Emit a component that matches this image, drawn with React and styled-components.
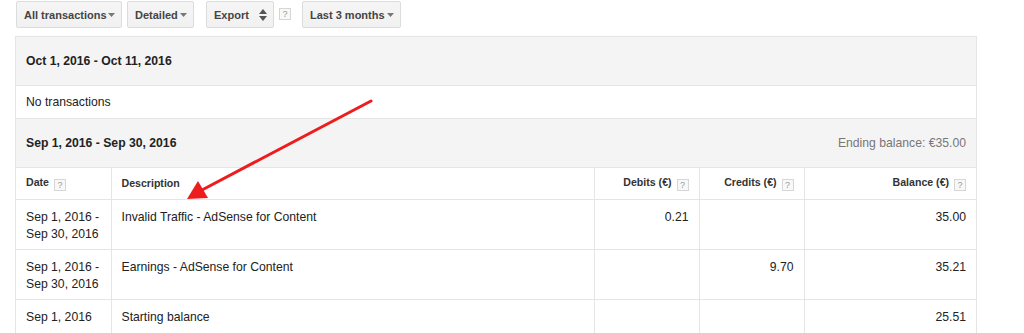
import React from 'react';
import styled, { createGlobalStyle } from 'styled-components';

const GlobalStyle = createGlobalStyle`
  body {
    margin: 0;
    background: #fff;
    font-family: 'Liberation Sans', Arial, sans-serif;
    color: #222;
  }
`;

function Help() {
  return <HelpBox>?</HelpBox>;
}

function Caret() {
  return (
    <svg width="7" height="4" viewBox="0 0 7 4">
      <path d="M0 0 L7 0 L3.5 4 Z" fill="#777" />
    </svg>
  );
}

function UpDown() {
  return (
    <svg width="8" height="12" viewBox="0 0 8 12">
      <path d="M0 5 L8 5 L4 0 Z" fill="#555" />
      <path d="M0 7 L8 7 L4 12 Z" fill="#555" />
    </svg>
  );
}

const rows = [
  { date: ['Sep 1, 2016 -', 'Sep 30, 2016'], desc: 'Invalid Traffic - AdSense for Content', debit: '0.21', credit: '', balance: '35.00' },
  { date: ['Sep 1, 2016 -', 'Sep 30, 2016'], desc: 'Earnings - AdSense for Content', debit: '', credit: '9.70', balance: '35.21' },
  { date: ['Sep 1, 2016'], desc: 'Starting balance', debit: '', credit: '', balance: '25.51' },
];

function App() {
  return (
    <Page>
      <GlobalStyle />
      <Toolbar>
        <Button $w={106}>All transactions <Caret /></Button>
        <Button $w={67}>Detailed <Caret /></Button>
        <Button $w={68} $ml={7}>Export <UpDown /></Button>
        <ToolHelp><Help /></ToolHelp>
        <Button $w={99} $ml={6}>Last 3 months <Caret /></Button>
      </Toolbar>

      <Panel>
        <SectionHead>
          <span>Oct 1, 2016 - Oct 11, 2016</span>
        </SectionHead>
        <Empty>No transactions</Empty>
        <SectionHead>
          <span>Sep 1, 2016 - Sep 30, 2016</span>
          <Ending>Ending balance: €35.00</Ending>
        </SectionHead>
        <Table>
          <colgroup>
            <col style={{ width: 95 }} />
            <col style={{ width: 483 }} />
            <col style={{ width: 105 }} />
            <col style={{ width: 105 }} />
            <col />
          </colgroup>
          <thead>
            <tr>
              <Th>Date <Help /></Th>
              <Th>Description</Th>
              <Th $right>Debits (€) <Help /></Th>
              <Th $right>Credits (€) <Help /></Th>
              <Th $right>Balance (€) <Help /></Th>
            </tr>
          </thead>
          <tbody>
            {rows.map((r, i) => (
              <tr key={i}>
                <Td $nowrap>{r.date.map((d) => <div key={d}>{d}</div>)}</Td>
                <Td>{r.desc}</Td>
                <Td $right>{r.debit}</Td>
                <Td $right>{r.credit}</Td>
                <Td $right>{r.balance}</Td>
              </tr>
            ))}
          </tbody>
        </Table>
      </Panel>

      <Arrow width="1024" height="333" viewBox="0 0 1024 333">
        <line x1="371" y1="101" x2="202" y2="190" stroke="#ee1c1c" strokeWidth="3" strokeLinecap="round" />
        <path d="M187 199 L198 181 L208 198 Z" fill="#ee1c1c" />
      </Arrow>
    </Page>
  );
}

export default App;

const Page = styled.div`
  position: relative;
  width: 1024px;
  height: 333px;
  overflow: hidden;
  padding: 1px 0 0 15px;
  box-sizing: border-box;
`;

const Toolbar = styled.div`
  display: flex;
  align-items: center;
  gap: 5px;
  height: 27px;
  padding-left: 1px;
  margin-bottom: 8px;
`;

const Button = styled.div`
  display: flex;
  align-items: center;
  justify-content: space-between;
  box-sizing: border-box;
  width: ${(p) => p.$w}px;
  height: 27px;
  margin-left: ${(p) => p.$ml || 0}px;
  padding: 0 6px 0 7px;
  background: linear-gradient(#f5f5f5, #f1f1f1);
  border: 1px solid #dcdcdc;
  border-radius: 2px;
  font-size: 11px;
  font-weight: bold;
  color: #444;
  white-space: nowrap;
`;

const ToolHelp = styled.div`
  display: flex;
  margin-left: -2px;
  padding-bottom: 1px;
`;

const HelpBox = styled.span`
  display: inline-flex;
  align-items: center;
  justify-content: center;
  box-sizing: border-box;
  width: 12px;
  height: 12px;
  margin-left: 2px;
  border: 1px solid #d6d6d6;
  background: #f8f8f8;
  color: #999;
  font-size: 9px;
  font-weight: normal;
  vertical-align: -2px;
  line-height: 1;
`;

const Panel = styled.div`
  width: 962px;
  border: 1px solid #e5e5e5;
  border-bottom: none;
  box-sizing: border-box;
`;

const SectionHead = styled.div`
  display: flex;
  align-items: center;
  justify-content: space-between;
  height: 48px;
  padding: 0 10px;
  background: #f4f4f4;
  border-bottom: 1px solid #e5e5e5;
  font-size: 12.2px;
  font-weight: bold;
  color: #222;
`;

const Ending = styled.span`
  font-weight: normal;
  color: #777;
`;

const Empty = styled.div`
  height: 32px;
  display: flex;
  align-items: center;
  padding: 0 10px;
  border-bottom: 1px solid #e5e5e5;
  font-size: 12.2px;
  color: #222;
`;

const Table = styled.table`
  width: 100%;
  table-layout: fixed;
  border-collapse: collapse;
  font-size: 12.2px;
`;

const Th = styled.th`
  height: 31px;
  padding: 0 10px;
  box-sizing: border-box;
  text-align: ${(p) => (p.$right ? 'right' : 'left')};
  font-size: 10.6px;
  font-weight: bold;
  color: #333;
  border-bottom: 1px solid #e5e5e5;
  border-left: 1px solid #e5e5e5;
  white-space: nowrap;
  &:first-child { border-left: none; }
`;

const Td = styled.td`
  vertical-align: top;
  padding: 9px 10px 6px;
  line-height: 17px;
  height: 34px;
  text-align: ${(p) => (p.$right ? 'right' : 'left')};
  white-space: ${(p) => (p.$nowrap ? 'nowrap' : 'normal')};
  color: #222;
  border-bottom: 1px solid #e5e5e5;
  border-left: 1px solid #e5e5e5;
  &:first-child { border-left: none; }
`;

const Arrow = styled.svg`
  position: absolute;
  left: 0;
  top: 0;
  pointer-events: none;
`;
